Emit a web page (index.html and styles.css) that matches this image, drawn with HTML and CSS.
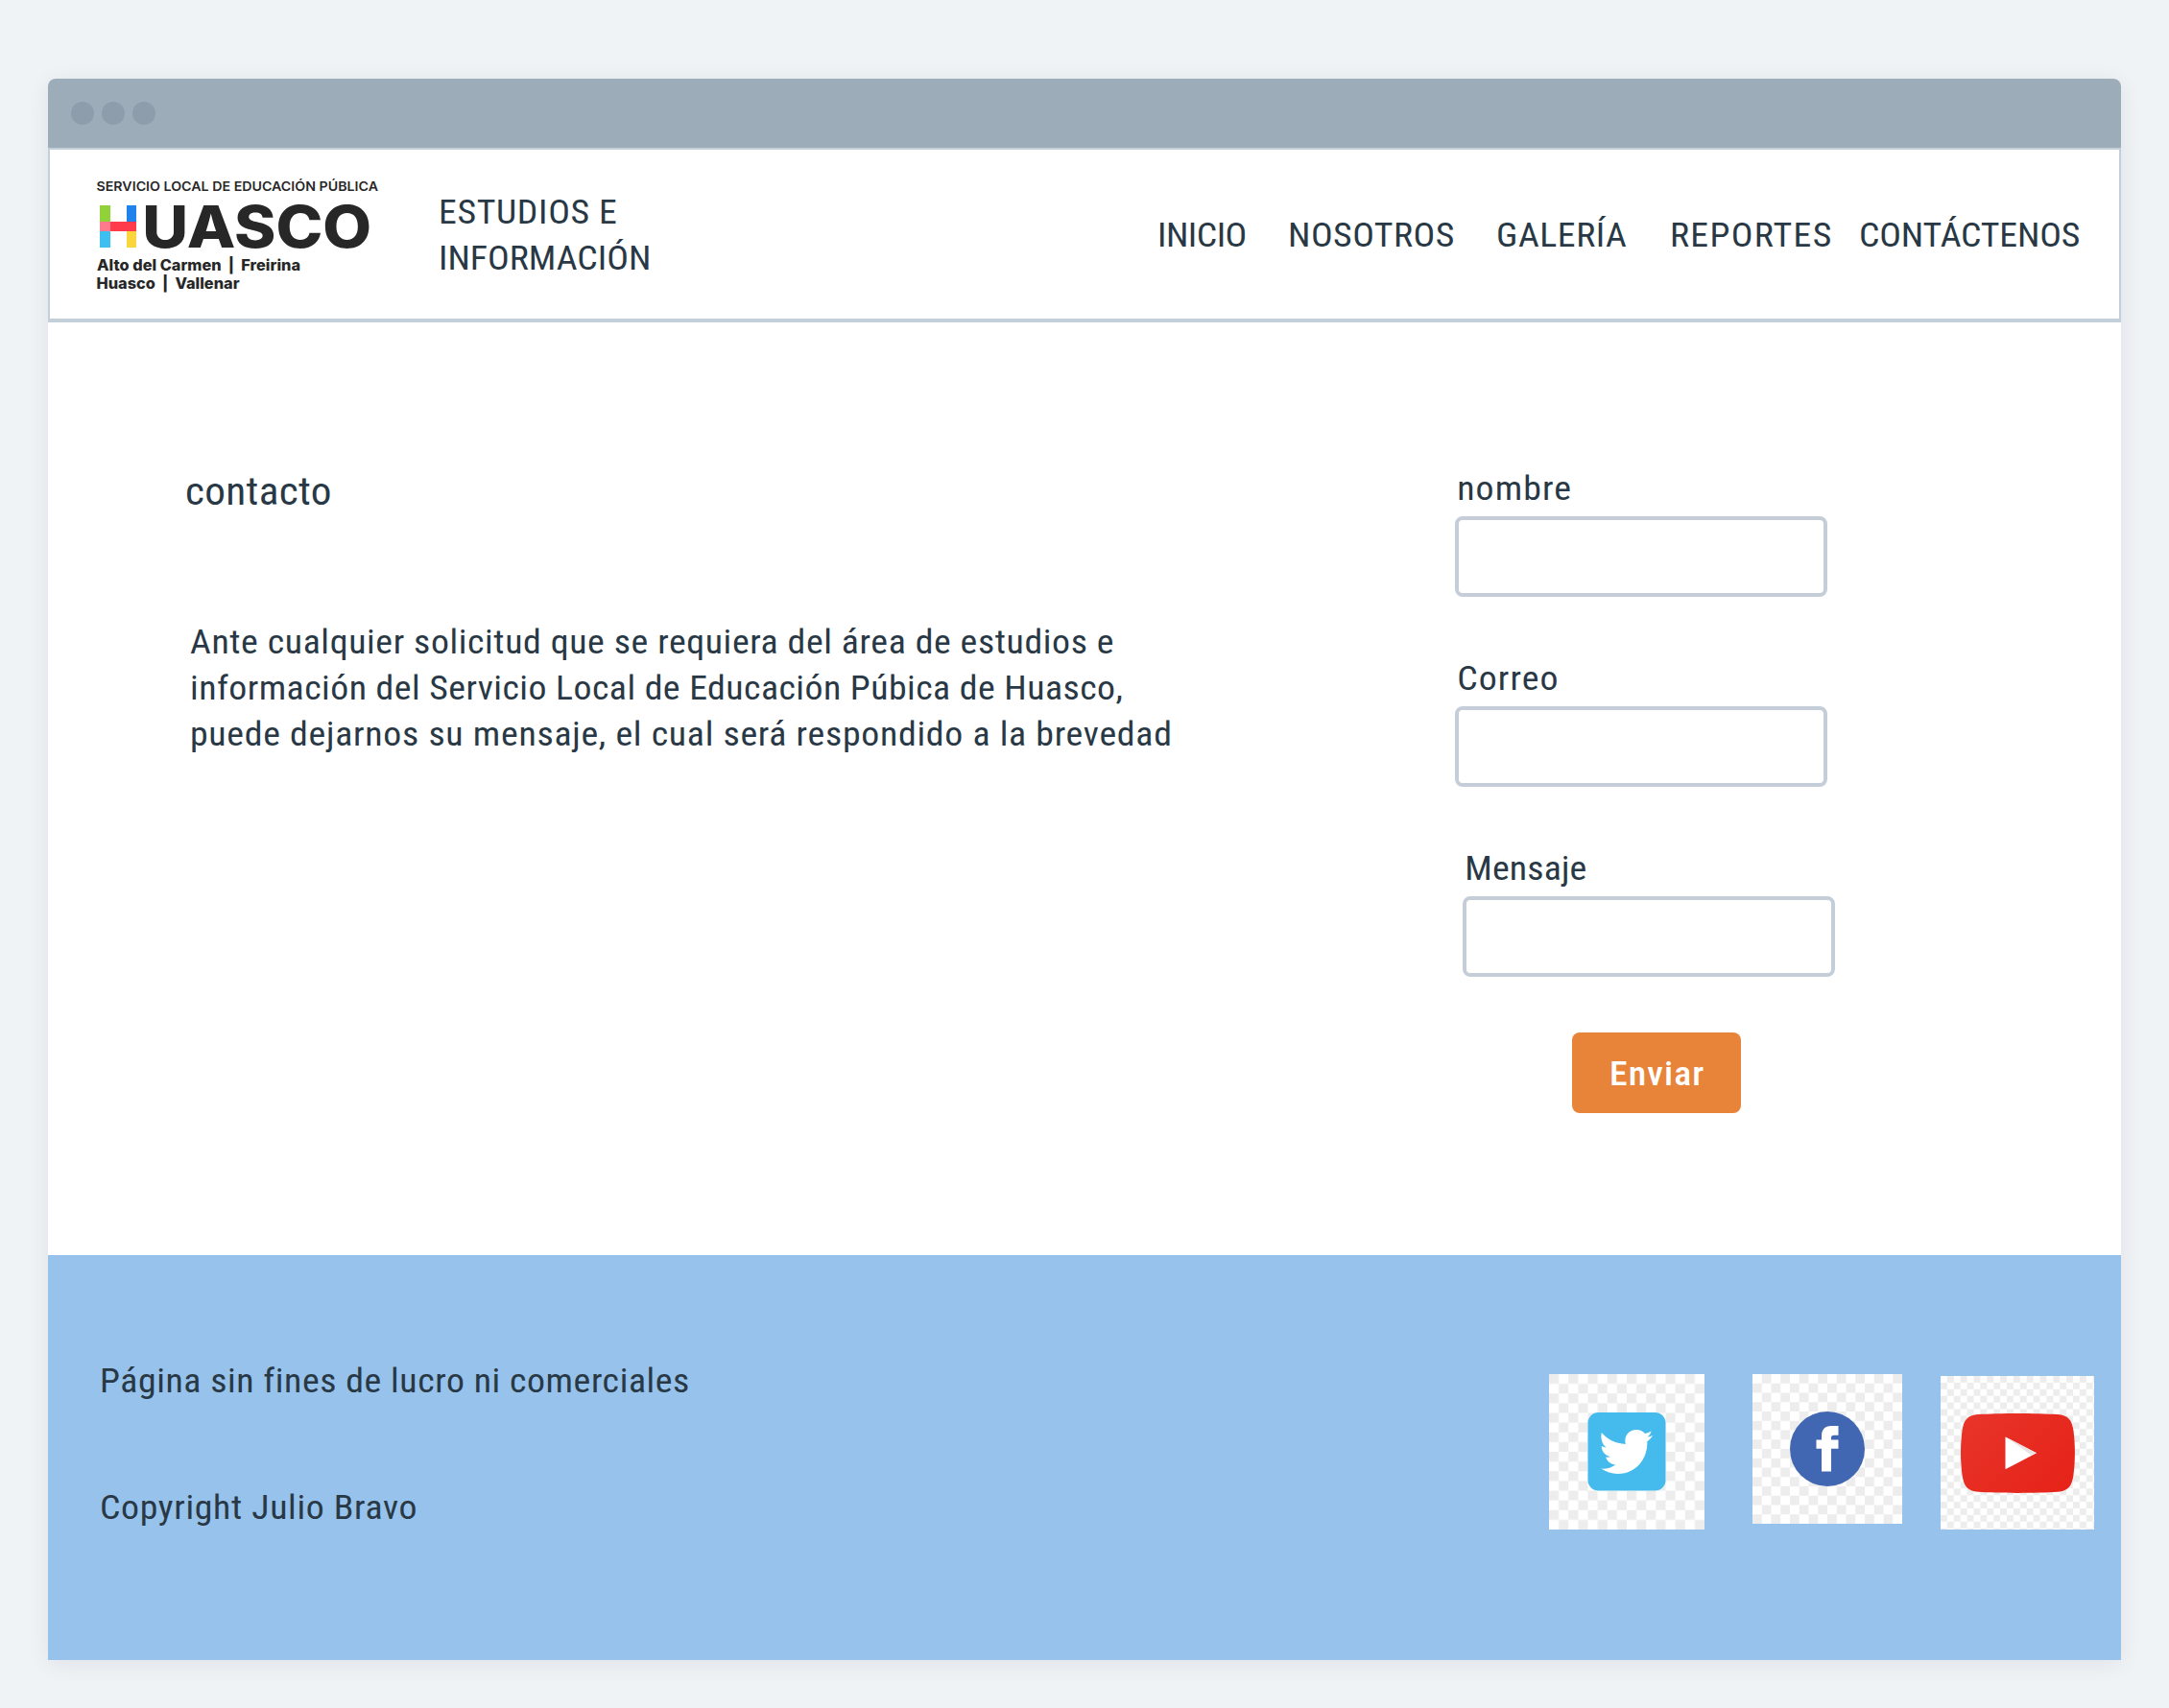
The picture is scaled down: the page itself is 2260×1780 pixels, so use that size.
FILE: index.html
```html
<!DOCTYPE html>
<html lang="es">
<head>
<meta charset="utf-8">
<title>Contacto</title>
<link rel="stylesheet" href="styles.css">
</head>
<body>
<div class="window">
  <div class="titlebar"><span class="dot"></span><span class="dot"></span><span class="dot"></span></div>

  <header class="header">
    <svg class="logo" viewBox="0 0 300 130" width="300" height="130">
      <text class="logo-top" x="-0.5" y="19.3" textLength="293.5" lengthAdjust="spacingAndGlyphs">SERVICIO LOCAL DE EDUCACIÓN PÚBLICA</text>
      <rect x="3" y="34" width="11" height="17.5" fill="#90d237"/>
      <rect x="31" y="34" width="10" height="17.5" fill="#2083ec"/>
      <rect x="3" y="61" width="11" height="17" fill="#3dbff2"/>
      <rect x="31" y="61" width="10" height="17" fill="#fad63c"/>
      <rect x="14" y="51" width="27" height="10" fill="#ff3b4c"/>
      <rect x="3" y="51" width="11" height="10" fill="#ff7a8b"/>
      <text class="logo-name" x="47.2" y="78" textLength="239" lengthAdjust="spacingAndGlyphs">UASCO</text>
      <text class="logo-sub" x="0" y="101.8" textLength="212" lengthAdjust="spacingAndGlyphs" xml:space="preserve">Alto del Carmen  |  Freirina</text>
      <text class="logo-sub" x="-0.5" y="121.3" textLength="149" lengthAdjust="spacingAndGlyphs" xml:space="preserve">Huasco  |  Vallenar</text>
    </svg>
    <div class="brand"><span class="t b1">ESTUDIOS E</span><span class="t b2">INFORMACIÓN</span></div>
    <nav class="nav">
      <a class="t n1">INICIO</a><a class="t n2">NOSOTROS</a><a class="t n3">GALERÍA</a><a class="t n4">REPORTES</a><a class="t n5">CONTÁCTENOS</a>
    </nav>
  </header>

  <main class="main">
    <section class="intro">
      <h1 class="t title">contacto</h1>
      <p class="copy"><span class="t l1">Ante cualquier solicitud que se requiera del área de estudios e</span><span class="t l2">información del Servicio Local de Educación Púbica de Huasco,</span><span class="t l3">puede dejarnos su mensaje, el cual será respondido a la brevedad</span></p>
    </section>
    <form class="form">
      <div class="field"><label class="t f1" for="nombre">nombre</label><input id="nombre" type="text"></div>
      <div class="field"><label class="t f2" for="correo">Correo</label><input id="correo" type="text"></div>
      <div class="field shifted"><label class="t f3" for="mensaje">Mensaje</label><input id="mensaje" type="text"></div>
      <button class="send" type="button"><span class="t">Enviar</span></button>
    </form>
  </main>

  <footer class="footer">
    <div class="legal">
      <p class="t g1">Página sin fines de lucro ni comerciales</p>
      <p class="t g2">Copyright Julio Bravo</p>
    </div>
    <div class="social">
      <svg class="twitter" viewBox="0 0 162 162" width="162" height="162">
        <defs><pattern id="ct" width="20.25" height="20.25" patternUnits="userSpaceOnUse"><rect width="20.25" height="20.25" fill="#fff"/><path d="M0 0h10.125v10.125H0zM10.125 10.125h10.125v10.125H10.125z" fill="#ededed"/></pattern></defs>
        <rect width="162" height="162" fill="url(#ct)"/>
        <rect x="40.5" y="40" width="81" height="81.5" rx="11" fill="#44bbec"/>
        <path d="M54.8 61C60 67.500 69 72.500 79.800 73C77.500 64 84 58 91 58C94.800 58 97.800 59.600 100 62C102.500 61.500 104.500 60.500 106.600 59.200C105.800 62 104.500 64 102.500 65.500C104.500 65.300 106 64.800 108 64C106.600 66.500 104.500 68.700 102.300 70.300C103 89 90 104 71.500 104C65.500 104 59.500 102 54.200 98.600C59.500 99 65 97.800 69.300 94.500C64.500 94.300 60.500 91 59 86.500C60.500 86.800 62.500 86.700 64 86.200C58.500 85 54.800 80.500 54.700 75C56.200 75.800 58 76.400 59.700 76.400C55 73 53.500 66.500 54.800 61Z" fill="#fff"/>
      </svg>
      <svg class="facebook" viewBox="0 0 156 156" width="156" height="156">
        <defs><pattern id="cf" width="19.5" height="19.5" patternUnits="userSpaceOnUse"><rect width="19.5" height="19.5" fill="#fff"/><path d="M9.750 0h9.750v9.750H9.750zM0 9.750h9.750v9.750H0z" fill="#ededed"/></pattern></defs>
        <rect width="156" height="156" fill="url(#cf)"/>
        <circle cx="78" cy="78" r="39" fill="#4267b2"/>
        <path d="M72 101.500V77.700H66.500V68.500H72V65C72 57.500 75.500 54 82 54H89.500V63.700H85C82.600 63.700 82 64.600 82 66.500V68.500H89.500V77.700H82V101.500Z" fill="#fff"/>
      </svg>
      <svg class="youtube" viewBox="0 0 160 160" width="160" height="160">
        <defs>
          <pattern id="cy" width="13.800" height="13.800" patternUnits="userSpaceOnUse"><rect width="13.800" height="13.800" fill="#fff"/><path d="M6.900 0h6.900v6.900H6.900zM0 6.900h6.900v6.900H0z" fill="#ededed"/></pattern>
          <linearGradient id="red" x1="0" y1="0" x2="1" y2="0.700"><stop offset="0" stop-color="#e8352b"/><stop offset="1" stop-color="#e6241a"/></linearGradient>
        </defs>
        <rect width="160" height="160" fill="url(#cy)"/>
        <path d="M39 40C60 38.500 100 38.500 122 40C133 40.800 137 46 138.500 57C140.400 72 140.400 88 138.500 103C137 114.500 133 120 122 120.800C100 122.300 60 122.300 39 120.800C28 120 24 114.500 22.500 103C20.500 88 20.500 72 22.500 57C24 46 28 40.800 39 40Z" fill="url(#red)"/>
        <path d="M67.500 63.500L100 80.300L67.500 97.300Z" fill="#fff"/>
        <path d="M67.500 63.500L100 80.300L94 82Z" fill="#e9e4e4"/>
      </svg>
    </div>
  </footer>
</div>
</body>
</html>
```
FILE: styles.css
```css
* { box-sizing: border-box; }

body {
  margin: 0;
  padding: 82px 50px 50px;
  background: #eff3f6;
  color: #293845;
  font: 35px/48px "Roboto Condensed", Roboto, sans-serif;
  font-stretch: 75%;
}

p, h1 { margin: 0; font-weight: 400; }

/* slightly widened condensed face */
.t {
  display: block;
  width: max-content;
  white-space: nowrap;
  transform: scaleX(1.08);
  transform-origin: 0 0;
}

.window {
  width: 2160px;
  height: 1648px;
  display: flex;
  flex-direction: column;
  background: #fff;
  border-radius: 8px 8px 0 0;
  box-shadow: 0 4px 24px rgba(30, 25, 40, .07);
}

.titlebar {
  height: 72px;
  padding: 24px;
  display: flex;
  gap: 8px;
  background: #9dacb9;
  border-radius: 8px 8px 0 0;
}
.dot { width: 24px; height: 24px; border-radius: 50%; background: #8d9dac; }

.header {
  height: 182px;
  padding: 0 38px 0 49px;
  display: flex;
  align-items: center;
  border: 2px solid #c3cfd9;
  border-bottom-width: 4px;
}
.logo { margin: 2px 56px 0 0; overflow: visible; }
.logo text { fill: #272727; font-family: Inter, sans-serif; font-stretch: 100%; }
.logo .logo-top { font-size: 13.500px; font-weight: 600; }
.logo .logo-name { font-size: 60px; font-weight: 800; }
.logo .logo-sub { font-size: 15.500px; font-weight: 800; }
.brand { padding-top: 4px; }
.b1 { letter-spacing: .590px; }
.b2 { letter-spacing: 0; }
.nav {
  margin-left: auto;
  padding-top: 4px;
  display: grid;
  grid-template-columns: 136px 217px 181px 197px 233px;
}
.n1 { letter-spacing: -.480px; }
.n2 { letter-spacing: .440px; }
.n3 { letter-spacing: .520px; }
.n4 { letter-spacing: 1.200px; }
.n5 { letter-spacing: -.140px; }

.main {
  height: 972px;
  padding: 149px 0 0 143px;
  display: flex;
}
.intro { width: 1323px; }
.title { font-size: 40px; line-height: 56px; letter-spacing: .310px; }
.copy { margin: 105px 0 0 5px; }
.l1 { letter-spacing: .560px; }
.l2 { letter-spacing: .420px; }
.l3 { letter-spacing: .670px; }

.form { display: flex; flex-direction: column; align-items: flex-start; padding-top: 1px; }
.field { display: flex; flex-direction: column; gap: 4px; margin-bottom: 62px; }
.field label { padding-left: 2px; }
.field input {
  width: 388px;
  height: 84px;
  border: 4px solid #c5ced8;
  border-radius: 8px;
  background: #fff;
}
.shifted { margin: 0 0 58px 8px; }
.f1 { letter-spacing: 1.040px; }
.f2 { letter-spacing: 1.040px; }
.f3 { letter-spacing: .150px; }
.send {
  width: 176px;
  height: 84px;
  margin-left: 122px;
  padding: 3px 0 0 39px;
  border: 0;
  border-radius: 8px;
  background: #e8833a;
  color: #fff;
  font: inherit;
  font-weight: 500;
  letter-spacing: 1px;
}

.footer {
  height: 422px;
  display: flex;
  justify-content: space-between;
  background: #96c2eb;
}
.legal {
  padding: 108px 0 0 54px;
  display: flex;
  flex-direction: column;
  gap: 84px;
}
.g1 { letter-spacing: .520px; }
.g2 { letter-spacing: .620px; }
.social { display: flex; align-items: flex-start; padding: 124px 28px 0 0; }
.twitter { margin-right: 50px; }
.facebook { margin-right: 40px; }
.youtube { margin-top: 2px; }
```
